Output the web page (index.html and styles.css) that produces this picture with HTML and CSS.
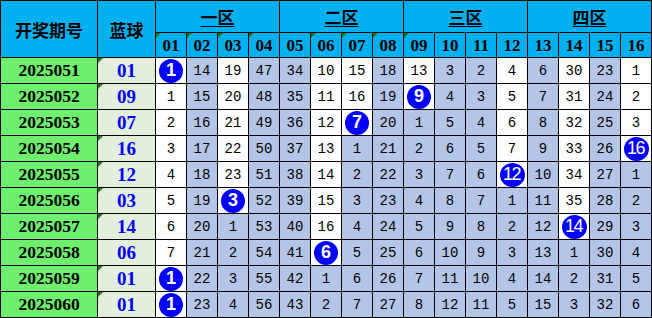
FILE: index.html
```html
<!DOCTYPE html>
<html lang="zh-CN">
<head>
<meta charset="utf-8">
<title>蓝球遗漏</title>
<link rel="stylesheet" href="styles.css">
</head>
<body>
<div class="grid">
  <div class="h h-tall">开奖期号</div>
  <div class="h h-tall">蓝球</div>
  <div class="h zone"><u>一区</u></div>
  <div class="h zone"><u>二区</u></div>
  <div class="h zone"><u>三区</u></div>
  <div class="h zone"><u>四区</u></div>

  <div class="h n tri">01</div><div class="h n tri">02</div><div class="h n tri">03</div><div class="h n tri">04</div>
  <div class="h n">05</div><div class="h n tri">06</div><div class="h n tri">07</div><div class="h n tri">08</div>
  <div class="h n tri">09</div><div class="h n">10</div><div class="h n">11</div><div class="h n">12</div>
  <div class="h n">13</div><div class="h n">14</div><div class="h n">15</div><div class="h n">16</div>

  <!-- 2025051 -->
  <div class="p">2025051</div><div class="bl tri">01</div>
  <div class="c"><span class="ball">1</span></div><div class="c s">14</div><div class="c">19</div><div class="c s">47</div>
  <div class="c s">34</div><div class="c">10</div><div class="c">15</div><div class="c s">18</div>
  <div class="c">13</div><div class="c s">3</div><div class="c s">2</div><div class="c">4</div>
  <div class="c s">6</div><div class="c">30</div><div class="c s">23</div><div class="c">1</div>

  <!-- 2025052 -->
  <div class="p">2025052</div><div class="bl tri">09</div>
  <div class="c">1</div><div class="c s">15</div><div class="c">20</div><div class="c s">48</div>
  <div class="c s">35</div><div class="c">11</div><div class="c">16</div><div class="c s">19</div>
  <div class="c"><span class="ball">9</span></div><div class="c s">4</div><div class="c s">3</div><div class="c">5</div>
  <div class="c s">7</div><div class="c">31</div><div class="c s">24</div><div class="c">2</div>

  <!-- 2025053 -->
  <div class="p">2025053</div><div class="bl">07</div>
  <div class="c">2</div><div class="c s">16</div><div class="c">21</div><div class="c s">49</div>
  <div class="c s">36</div><div class="c">12</div><div class="c"><span class="ball">7</span></div><div class="c s">20</div>
  <div class="c s">1</div><div class="c s">5</div><div class="c s">4</div><div class="c">6</div>
  <div class="c s">8</div><div class="c">32</div><div class="c s">25</div><div class="c">3</div>

  <!-- 2025054 -->
  <div class="p">2025054</div><div class="bl tri">16</div>
  <div class="c">3</div><div class="c s">17</div><div class="c">22</div><div class="c s">50</div>
  <div class="c s">37</div><div class="c">13</div><div class="c s">1</div><div class="c s">21</div>
  <div class="c s">2</div><div class="c s">6</div><div class="c s">5</div><div class="c">7</div>
  <div class="c s">9</div><div class="c">33</div><div class="c s">26</div><div class="c"><span class="ball two">16</span></div>

  <!-- 2025055 -->
  <div class="p">2025055</div><div class="bl tri">12</div>
  <div class="c">4</div><div class="c s">18</div><div class="c">23</div><div class="c s">51</div>
  <div class="c s">38</div><div class="c">14</div><div class="c s">2</div><div class="c s">22</div>
  <div class="c s">3</div><div class="c s">7</div><div class="c s">6</div><div class="c"><span class="ball two">12</span></div>
  <div class="c s">10</div><div class="c">34</div><div class="c s">27</div><div class="c s">1</div>

  <!-- 2025056 -->
  <div class="p">2025056</div><div class="bl tri">03</div>
  <div class="c">5</div><div class="c s">19</div><div class="c"><span class="ball">3</span></div><div class="c s">52</div>
  <div class="c s">39</div><div class="c">15</div><div class="c s">3</div><div class="c s">23</div>
  <div class="c s">4</div><div class="c s">8</div><div class="c s">7</div><div class="c s">1</div>
  <div class="c s">11</div><div class="c">35</div><div class="c s">28</div><div class="c s">2</div>

  <!-- 2025057 -->
  <div class="p">2025057</div><div class="bl tri">14</div>
  <div class="c">6</div><div class="c s">20</div><div class="c s">1</div><div class="c s">53</div>
  <div class="c s">40</div><div class="c">16</div><div class="c s">4</div><div class="c s">24</div>
  <div class="c s">5</div><div class="c s">9</div><div class="c s">8</div><div class="c s">2</div>
  <div class="c s">12</div><div class="c"><span class="ball two">14</span></div><div class="c s">29</div><div class="c s">3</div>

  <!-- 2025058 -->
  <div class="p">2025058</div><div class="bl">06</div>
  <div class="c">7</div><div class="c s">21</div><div class="c s">2</div><div class="c s">54</div>
  <div class="c s">41</div><div class="c"><span class="ball">6</span></div><div class="c s">5</div><div class="c s">25</div>
  <div class="c s">6</div><div class="c s">10</div><div class="c s">9</div><div class="c s">3</div>
  <div class="c s">13</div><div class="c s">1</div><div class="c s">30</div><div class="c s">4</div>

  <!-- 2025059 -->
  <div class="p">2025059</div><div class="bl tri">01</div>
  <div class="c"><span class="ball">1</span></div><div class="c s">22</div><div class="c s">3</div><div class="c s">55</div>
  <div class="c s">42</div><div class="c s">1</div><div class="c s">6</div><div class="c s">26</div>
  <div class="c s">7</div><div class="c s">11</div><div class="c s">10</div><div class="c s">4</div>
  <div class="c s">14</div><div class="c s">2</div><div class="c s">31</div><div class="c s">5</div>

  <!-- 2025060 -->
  <div class="p">2025060</div><div class="bl tri">01</div>
  <div class="c"><span class="ball">1</span></div><div class="c s">23</div><div class="c s">4</div><div class="c s">56</div>
  <div class="c s">43</div><div class="c s">2</div><div class="c s">7</div><div class="c s">27</div>
  <div class="c s">8</div><div class="c s">12</div><div class="c s">11</div><div class="c s">5</div>
  <div class="c s">15</div><div class="c s">3</div><div class="c s">32</div><div class="c s">6</div>
</div>
</body>
</html>
```

FILE: styles.css
```css
html, body {
  margin: 0;
  padding: 0;
  background: #ffffff;
}

.grid {
  display: grid;
  grid-template-columns: 96px 57px repeat(16, 30px);
  grid-template-rows: 31px 24px repeat(10, 25px);
  gap: 1px;
  padding: 1px;
  background: #000000;
  width: 650px;
}

.grid > div {
  display: flex;
  align-items: center;
  justify-content: center;
  position: relative;
  overflow: hidden;
}

.h {
  background: #00b0f0;
  color: #000000;
  font-family: "Noto Sans CJK SC", sans-serif;
  font-weight: bold;
  font-size: 17px;
}

.h-tall {
  grid-row: span 2;
}

.zone {
  grid-column: span 4;
}

.zone u {
  text-decoration: underline;
  text-underline-offset: 2px;
  text-decoration-thickness: 1px;
}

.h.n {
  font-family: "Liberation Serif", serif;
  font-size: 17px;
  padding-top: 1px;
}

.tri::before {
  content: "";
  position: absolute;
  left: 0;
  top: 0;
  border-top: 5px solid #1f7a1f;
  border-right: 5px solid transparent;
}

.p {
  background: #6ef06e;
  font-family: "Liberation Serif", serif;
  font-weight: bold;
  font-size: 17.5px;
  color: #000000;
}

.bl {
  background: #e2efda;
  font-family: "Liberation Serif", serif;
  font-weight: bold;
  font-size: 19px;
  color: #0000ff;
}

.c {
  background: #ffffff;
  font-family: "Liberation Mono", monospace;
  font-size: 14px;
  color: #000000;
}

.c.s {
  background: #b4c6e7;
}

.ball {
  width: 24px;
  height: 24px;
  border-radius: 50%;
  background: #0000ff;
  color: #ffffff;
  font-family: "Liberation Sans", sans-serif;
  font-weight: bold;
  font-size: 18px;
  display: flex;
  align-items: center;
  justify-content: center;
}

.ball.two {
  font-weight: normal;
  font-size: 18px;
  letter-spacing: -1.5px;
  padding-right: 1px;
}
```
